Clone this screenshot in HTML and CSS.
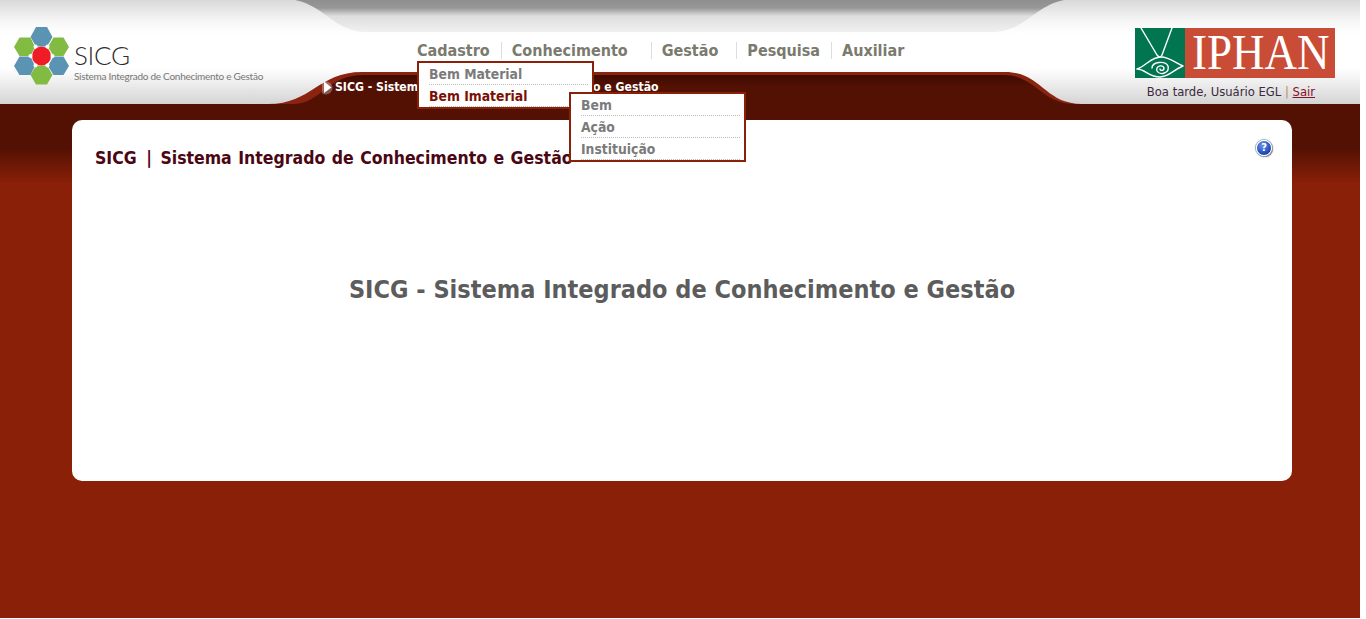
FILE: index.html
```html
<!DOCTYPE html>
<html lang="pt-BR">
<head>
<meta charset="utf-8">
<title>SICG</title>
<link rel="stylesheet" href="styles.css">
</head>
<body>
<div class="page">
  <header class="header">
    <svg class="header-bg" width="1360" height="104" viewBox="0 0 1360 104" aria-hidden="true">
      <defs>
        <linearGradient id="hbg" x1="0" y1="0" x2="0" y2="1">
          <stop offset="0" stop-color="#d9d9d9"/>
          <stop offset="0.2" stop-color="#f6f6f6"/>
          <stop offset="0.33" stop-color="#ffffff"/>
          <stop offset="0.66" stop-color="#ffffff"/>
          <stop offset="1" stop-color="#d4d4d4"/>
        </linearGradient>
        <linearGradient id="hgrey" x1="0" y1="0" x2="0" y2="1">
          <stop offset="0" stop-color="#8f8f8f"/>
          <stop offset="0.25" stop-color="#979797"/>
          <stop offset="0.5" stop-color="#dedede"/>
          <stop offset="1" stop-color="#f0f0f0"/>
        </linearGradient>
        <linearGradient id="hband" x1="0" y1="0" x2="0" y2="1">
          <stop offset="0" stop-color="#3f0b02"/>
          <stop offset="0.4" stop-color="#531103"/>
          <stop offset="1" stop-color="#531103"/>
        </linearGradient>
      </defs>
      <rect width="1360" height="104" fill="url(#hbg)"/>
      <path d="M295 0C325 6 335 32 366 32L993 32C1024 32 1034 6 1064 0Z" fill="url(#hgrey)"/>
      <path d="M268 104C312 104 318 72 362 72L1005 72C1042 72 1044 104 1082 104Z" fill="#8a2410"/>
      <path d="M294 104C322 103 326 75 364 75L1003 75C1036 75 1040 103 1074 104Z" fill="url(#hband)"/>
    </svg>

    <a class="brand" href="#">
      <svg class="brand-mark" width="56" height="60" viewBox="0 0 56 60" aria-hidden="true">
        <polygon points="16.500,12 22,2 33,2 38.500,12 33,21.500 22,21.500" fill="#5b93b3" transform="translate(0,-1)"/>
        <polygon points="0,21 5.500,11.500 16.500,11.500 21,21 16.500,30 5.500,30" fill="#82bb42"/>
        <polygon points="34,21 39.500,11.500 49.500,11.500 55,21 49.500,30 39.500,30" fill="#82bb42"/>
        <polygon points="0,40 5.500,30.500 16.500,30.500 21,40 16.500,49 5.500,49" fill="#5b93b3"/>
        <polygon points="34,40 39.500,30.500 49.500,30.500 55,40 49.500,49 39.500,49" fill="#5b93b3"/>
        <polygon points="16.500,49 22,39.500 33,39.500 38.500,49 33,58.500 22,58.500" fill="#82bb42"/>
        <circle cx="27.500" cy="30" r="9.500" fill="#ee1c25"/>
        <g fill="#fff">
          <circle cx="21.500" cy="20.500" r="2"/><circle cx="33.500" cy="20.500" r="2"/>
          <circle cx="16.500" cy="30" r="2"/><circle cx="38.500" cy="30" r="2"/>
          <circle cx="21.500" cy="39.500" r="2"/><circle cx="33.500" cy="39.500" r="2"/>
        </g>
      </svg>
      <span class="brand-text">
        <span class="brand-name">SICG</span>
        <span class="brand-full">Sistema Integrado de Conhecimento e Gestão</span>
      </span>
    </a>

    <div class="center">
      <nav class="nav">
        <ul class="nav-list">
          <li class="nav-item nav-item-open">
            <a href="#">Cadastro</a>
            <ul class="menu">
              <li class="menu-row"><a href="#">Bem Material</a></li>
              <li class="menu-row menu-row-active">
                <a href="#">Bem Imaterial</a>
                <ul class="menu submenu">
                  <li class="menu-row"><a href="#">Bem</a></li>
                  <li class="menu-row"><a href="#">Ação</a></li>
                  <li class="menu-row"><a href="#">Instituição</a></li>
                </ul>
              </li>
            </ul>
          </li>
          <li class="nav-item nav-item-wide"><a href="#">Conhecimento</a></li>
          <li class="nav-item nav-item-gestao"><a href="#">Gestão</a></li>
          <li class="nav-item nav-item-pesquisa"><a href="#">Pesquisa</a></li>
          <li class="nav-item"><a href="#">Auxiliar</a></li>
        </ul>
      </nav>
      <div class="crumb">
        <svg class="crumb-arrow" width="13" height="15" viewBox="0 0 13 15" aria-hidden="true">
          <circle cx="4" cy="8" r="6.500" fill="#fff" opacity="0.3"/>
          <polygon points="2,1.500 9.500,7.500 2,13" fill="#fff"/>
        </svg>
        <span>SICG - Sistema Integrado de Conhecimento e Gestão</span>
      </div>
    </div>

    <div class="account">
      <svg class="iphan" width="200" height="50" viewBox="0 0 200 50" role="img" aria-label="IPHAN">
        <rect width="50" height="50" fill="#00754f"/>
        <rect x="50" width="150" height="50" fill="#c94c36"/>
        <g fill="none" stroke="#fff" stroke-width="1.400" stroke-linecap="round">
          <path d="M6 0L22 27M37 0L27 27M22 27Q25 31 27 27"/>
          <path d="M2 41C11 38 16 29 26 29C34 29 41 35 48 38M2 41C10 41 14 49 25 49C34 49 38 42 48 38"/>
          <path d="M17 40C17 34 30 32 33 38C35 45 25 48 22 43C20 38 28 36 29 40C29 43 25 43 25 41"/>
        </g>
        <text class="iphan-text" transform="translate(57 41) scale(0.9 1)">IPHAN</text>
      </svg>
      <p class="greeting">Boa tarde, Usuário EGL <span class="sep">|</span> <a href="#">Sair</a></p>
    </div>
  </header>

  <main class="main">
    <section class="card">
      <h2 class="card-title">SICG <span class="card-title-sep">|</span> Sistema Integrado de Conhecimento e Gestão</h2>
      <a class="help" href="#"><span>?</span></a>
      <h1 class="card-heading">SICG - Sistema Integrado de Conhecimento e Gestão</h1>
    </section>
  </main>
</div>
</body>
</html>
```

FILE: styles.css
```css
* { box-sizing: border-box; }
html, body { margin: 0; padding: 0; background: #fff; }
body { font-family: "DejaVu Sans Condensed", "DejaVu Sans", sans-serif; overflow: hidden; }
a { color: inherit; text-decoration: none; }
ul { list-style: none; margin: 0; padding: 0; }

.page {
  width: 1360px;
  height: 618px;
  background: linear-gradient(#531103 0, #531103 148px, #8b2008 184px, #8b2008 100%);
}

.header {
  position: relative;
  height: 104px;
  display: flex;
  align-items: flex-start;
}
.header-bg { position: absolute; left: 0; top: 0; }

.brand {
  position: relative;
  width: 322px;
  flex: none;
  display: flex;
  align-items: flex-start;
  gap: 4px;
  padding: 26px 0 0 14px;
}
.brand-mark { flex: none; }
.brand-text { display: flex; flex-direction: column; padding-top: 14px; }
.brand-name {
  font: 300 26px/30px "Lato", sans-serif;
  color: #2c2c2c;
  letter-spacing: -0.300px;
}
.brand-full {
  font: 400 10px/13px "Lato", sans-serif;
  color: #777;
  white-space: nowrap;
  letter-spacing: -0.270px;
}

.center { position: relative; flex: 1; display: flex; flex-direction: column; }
.nav { padding: 42px 0 0 95px; }
.nav-list { display: flex; }
.nav-item {
  position: relative;
  height: 17px;
  padding: 0 11px 0 10px;
  border-left: 1px solid #ddd;
  font-size: 16px;
  line-height: 17px;
  font-weight: bold;
  color: #7a7a6e;
  white-space: nowrap;
}
.nav-item:first-child { padding-left: 11px; margin-left: -11px; border-left: 0; }
.nav-item-wide { padding-right: 23px; }
.nav-item-gestao { padding-right: 18px; }
.nav-item-pesquisa { padding-right: 11px; }

.menu {
  position: absolute;
  left: 11px;
  top: 19px;
  z-index: 2;
  width: 177px;
  padding: 0 4px 0 10px;
  background: #fff;
  border: 2px solid #8a2008;
}
.menu-row {
  position: relative;
  height: 22px;
  padding-top: 2px;
  border-bottom: 1px dotted #bbb;
  font-size: 13.800px;
  line-height: 19px;
  color: #7b7b7b;
}
.menu-row-active { color: #7a1005; }
.submenu { left: 140px; top: 7px; z-index: 3; color: #7b7b7b; }

.crumb {
  display: flex;
  align-items: center;
  height: 16px;
  margin-top: 20px;
  font-size: 12.150px;
  line-height: 16px;
  font-weight: bold;
  color: #fff;
  white-space: nowrap;
  position: relative;
}

.account {
  position: relative;
  flex: none;
  width: 225px;
  padding: 28px 25px 0 0;
  display: flex;
  flex-direction: column;
  align-items: flex-end;
}
.iphan { display: block; }
.iphan-text { font: 400 50px "Liberation Serif", serif; fill: #fff; }
.greeting {
  margin: 6px 20px 0 0;
  font-size: 12.900px;
  line-height: 15px;
  color: #3c2a3c;
  white-space: nowrap;
}
.greeting .sep { color: #b98b5a; }
.greeting a { color: #8a0f2a; text-decoration: underline; }

.main { padding: 16px 68px 0 72px; }
.card {
  position: relative;
  height: 361px;
  padding: 26px 23px 0;
  background: #fff;
  border-radius: 10px;
}
.card-title {
  margin: 0;
  font-size: 17.500px;
  line-height: 24px;
  font-weight: bold;
  word-spacing: 1px;
  color: #4a0613;
}
.card-title-sep { margin: 0 2px 0 3px; }
.help {
  position: absolute;
  right: 20px;
  top: 20px;
  width: 16px;
  height: 16px;
  display: flex;
  align-items: center;
  justify-content: center;
  border: 1.500px solid #fff;
  border-radius: 50%;
  background: radial-gradient(circle at 40% 30%, #6f94e6, #1a46b5 70%);
  box-shadow: 0 0 1px 1px #9aa3b5, 1px 1px 1px #666;
  color: #fff;
  font-size: 11px;
  line-height: 12px;
  font-weight: bold;
}
.card-heading {
  margin: 103px 0 0;
  text-align: center;
  font-size: 25px;
  line-height: 34px;
  font-weight: bold;
  color: #5c5c5c;
}
```
